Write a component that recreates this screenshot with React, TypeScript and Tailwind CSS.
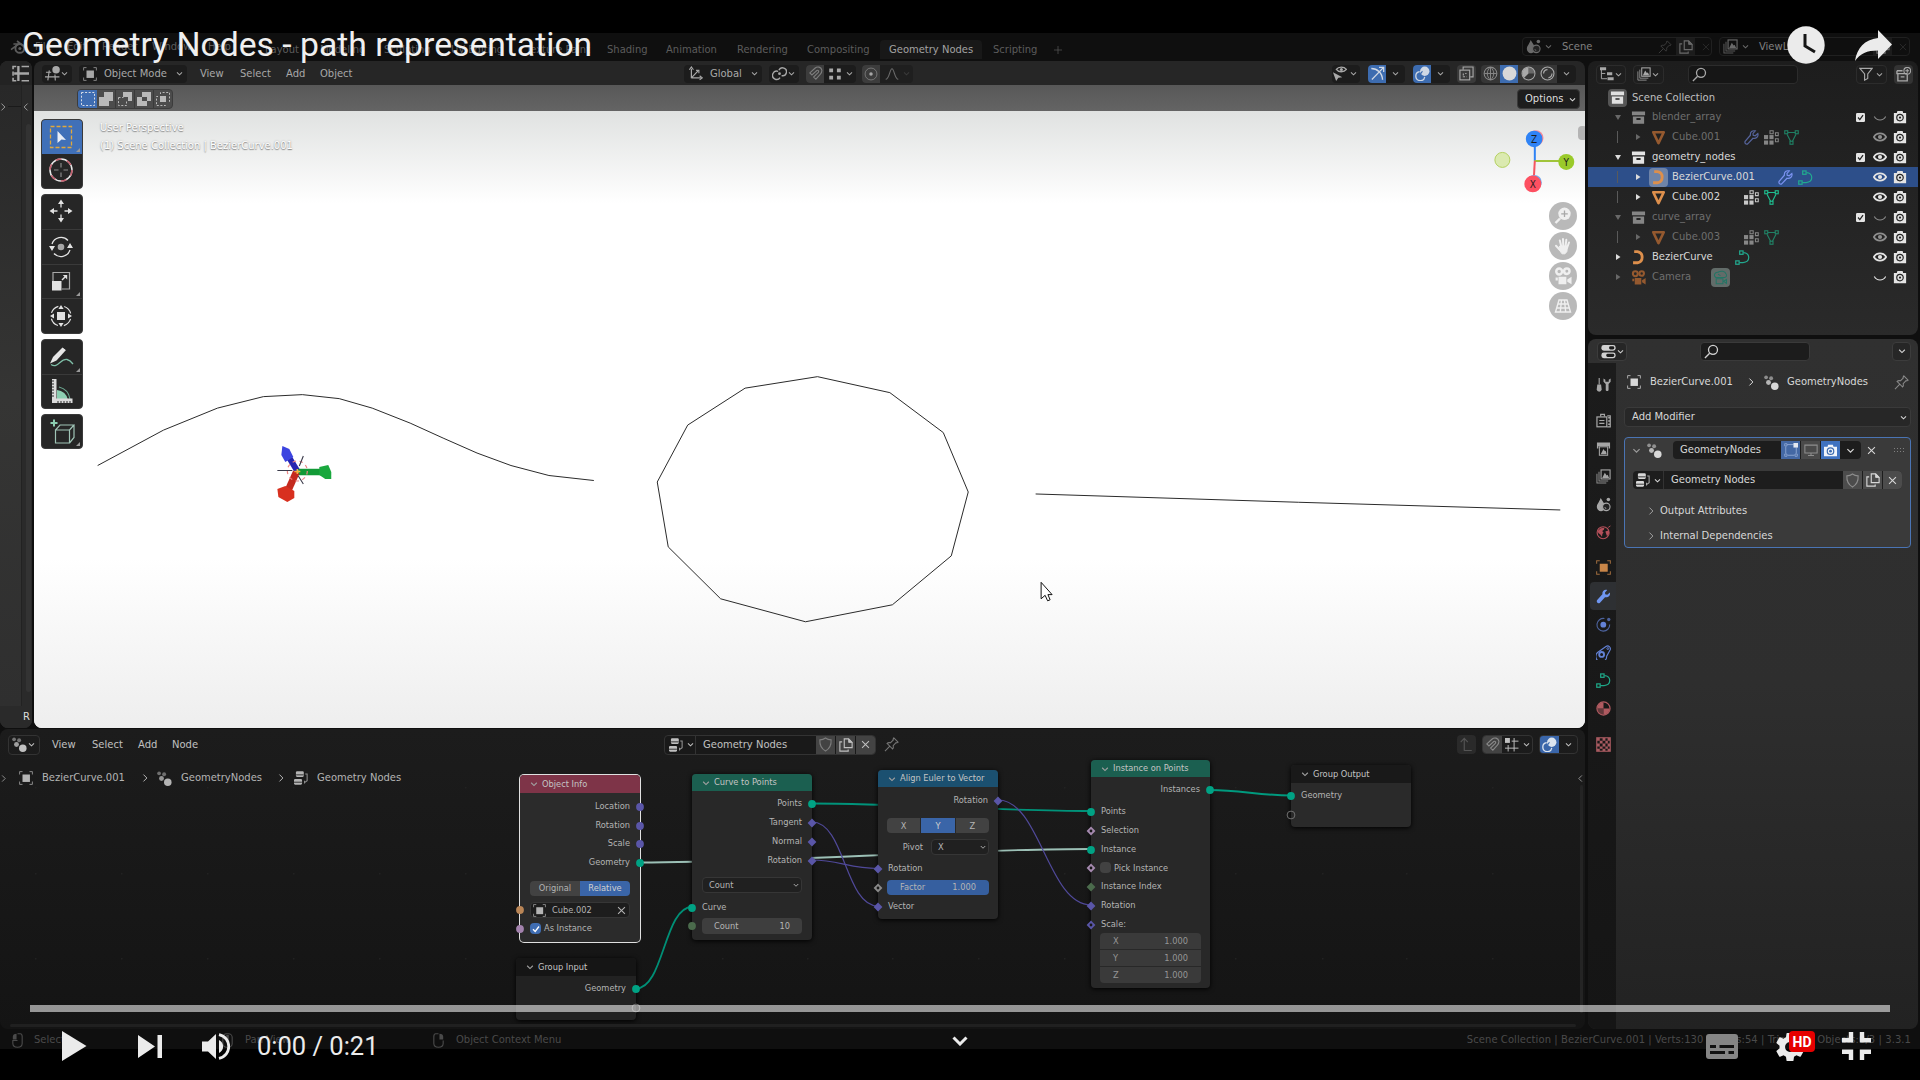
import React from "react";

type IconProps = { n: string; s?: number; className?: string };

const chev = "M3.5 6 L8 10.5 L12.5 6";

const ICONS: Record<string, React.ReactNode> = {
  down: <path d={chev} strokeWidth="1.8" />,
  right: <path d="M5.5 2.5 L11 8 L5.5 13.5" strokeWidth="1.6" />,
  left: <path d="M10.5 2.5 L5 8 L10.5 13.5" strokeWidth="1.6" />,
  x: <path d="M3 3 L13 13 M13 3 L3 13" strokeWidth="1.5" />,
  plus: <path d="M8 1.5 V14.5 M1.5 8 H14.5" strokeWidth="1.1" />,
  triRight: <path d="M4 2 L13 8 L4 14 Z" fill="currentColor" stroke="none" />,
  triDown: <path d="M2 4 L14 4 L8 14 Z" fill="currentColor" stroke="none" />,
  object: (
    <>
      <rect x="4" y="4" width="8.5" height="8.5" fill="currentColor" stroke="none" />
      <path d="M.7 4 V.7 H4 M12 .7 H15.3 V4 M15.3 12 V15.3 H12 M4 15.3 H.7 V12" strokeWidth="1.1" opacity=".75" />
    </>
  ),
  dots: (
    <g fill="currentColor" stroke="none">
      <circle cx="11.5" cy="12" r="4" />
      <circle cx="4.8" cy="8" r="2.6" opacity=".8" />
      <circle cx="2.2" cy="2.4" r="2" opacity=".55" />
      <circle cx="7.6" cy="3.4" r="2.1" opacity=".55" />
    </g>
  ),
  tree: (
    <>
      <g fill="currentColor" stroke="none">
        <rect x="2.2" y=".4" width="9" height="6.4" rx="1.3" />
        <rect x="0" y="9" width="9.2" height="6.6" rx="1.3" />
      </g>
      <path d="M2.4 4.4 H11 M0 12.8 H9" stroke="#222" strokeWidth="1" />
      <path d="M12.8 3.4 H15 V11 L11.6 13.5 M12 11 V14.4" strokeWidth="1.2" opacity=".75" />
    </>
  ),
  shield: <path d="M8 1 C10 2.6 12 3 14 3 C14.4 9 12.2 12.6 8 15 C3.8 12.6 1.6 9 2 3 C4 3 6 2.6 8 1 Z" strokeWidth="1.2" />,
  copy: (
    <>
      <path d="M6 1 H11 L15 5 V11 H6 Z" strokeWidth="1.3" />
      <path d="M11 1 V5 H15 Z" fill="currentColor" strokeWidth="1" />
      <path d="M3.6 4.5 H1 V15 H10.5 V13" strokeWidth="1.3" />
    </>
  ),
  pin: <path d="M10.5 1 L15 5.5 L13.6 6.4 L12.8 6 L9.8 9.2 C10.2 10.6 10 11.8 9.2 12.8 L3.2 6.8 C4.2 6 5.4 5.8 6.8 6.2 L10 3.2 L9.6 2.4 Z M6 10 L1 15" strokeWidth="1.1" />,
  search: (
    <>
      <circle cx="9.6" cy="6.2" r="4.8" strokeWidth="1.4" />
      <path d="M6 9.8 L1 15" strokeWidth="1.4" />
    </>
  ),
  scene: (
    <>
      <path d="M5 1 L9 7.5 A4.6 4.6 0 1 1 1 9.5 C1 8 3 6 5 1 Z" fill="currentColor" stroke="none" />
      <circle cx="11" cy="10.5" r="4" fill="#222" strokeWidth="1.2" />
      <path d="M9.5 10.8 A1.6 1.6 0 0 0 11 12.4" strokeWidth="1" />
      <circle cx="13.2" cy="2.6" r="1.9" fill="currentColor" stroke="none" />
    </>
  ),
  layers: (
    <>
      <rect x="5.4" y="1" width="9.6" height="9.6" strokeWidth="1.2" />
      <path d="M6.6 9.6 L9.4 4 L11.4 7 L12.4 6 L14 9.6 Z" fill="currentColor" stroke="none" />
      <path d="M3.2 3 V12.8 H13 M1 5 V15 H11" strokeWidth="1.1" opacity=".8" />
    </>
  ),
  printer: (
    <>
      <path d="M1 1.5 H15 V8 H13.5 V5.5 H2.5 V8 H1 Z" fill="currentColor" stroke="none" />
      <rect x="3.6" y="6.2" width="8.8" height="9" strokeWidth="1.1" />
      <path d="M5 14 L8 8.6 L9.6 11 L10.4 10.4 L11.4 14 Z" fill="currentColor" stroke="none" />
    </>
  ),
  render: (
    <>
      <rect x="1" y="4.2" width="10.5" height="10.5" strokeWidth="1.3" />
      <path d="M5 3.8 V1.4 H9 V3.8 M3.5 8 H9 M3.5 11 H9" strokeWidth="1.3" />
      <path d="M12 3 H15.2 V14.8 H12" strokeWidth="1.3" />
      <path d="M13 5 H15 M13 8.4 H15 M13 12 H15" strokeWidth="1.6" />
    </>
  ),
  tool: (
    <>
      <path d="M3.4 1 V8" strokeWidth="1.2" />
      <path d="M1.4 8 H5.4 L6 13 A2.6 2.6 0 0 1 .8 13 Z" fill="currentColor" stroke="none" />
      <path d="M8 1.5 V5 L10.4 7.4 V14 Q12 16 13.4 14 V7.4 L15.6 5 V1.5 L13.6 3 V5 H10 V3 Z" fill="currentColor" stroke="none" />
    </>
  ),
  world: (
    <>
      <circle cx="7.6" cy="8.2" r="6.4" strokeWidth="1.2" />
      <path d="M2 6 L5 3.4 L9 3 L8.4 5 L6.6 6.4 L8 8 L6.8 9.6 L6.4 12.6 L4.6 10 L2.4 8.6 Z M10 7 L13.8 5.6 L14 9 L11.8 12 L10.8 9.4 Z" fill="currentColor" stroke="none" />
      <path d="M13 2.6 L15.4 1" strokeWidth="1" />
    </>
  ),
  wrench: <path d="M14.8 3.8 L12 6.2 L9.8 5.6 L9.6 3.6 L12 1 C9 .2 6.4 2 6.8 5.6 L1 12 C.2 14.2 2 15.8 4 14.8 L9.6 8.8 C13.2 9.4 15.6 7 14.8 3.8 Z" fill="currentColor" stroke="none" />,
  wrenchO: <path d="M14.8 3.8 L12 6.2 L9.8 5.6 L9.6 3.6 L12 1 C9 .2 6.4 2 6.8 5.6 L1.2 12 C.4 14.2 2 15.8 4 14.8 L9.6 8.8 C13.2 9.4 15.6 7 14.8 3.8 Z" strokeWidth="1.3" />,
  physics: (
    <>
      <circle cx="7.8" cy="8.2" r="3.1" fill="currentColor" stroke="none" />
      <path d="M9 1.6 A6.8 6.8 0 1 0 14.6 8" strokeWidth="1.2" opacity=".7" />
      <circle cx="13.6" cy="2.6" r="1.8" fill="currentColor" stroke="none" opacity=".7" />
    </>
  ),
  constraint: (
    <>
      <circle cx="6" cy="10" r="2.6" strokeWidth="2" />
      <path d="M1.6 8 L10.6 1.6 A3 3 0 0 1 15 5.4 L11.4 12 A5.8 5.8 0 1 1 1.6 8 Z" strokeWidth="1.2" />
      <circle cx="12.6" cy="3.8" r="1" strokeWidth="1" />
    </>
  ),
  curve: (
    <>
      <rect x="5" y="1" width="3.6" height="3.6" strokeWidth="1.3" />
      <rect x=".8" y="11.6" width="3.6" height="3.6" strokeWidth="1.3" />
      <path d="M9 2.8 C16.6 3.2 16.6 13 8.6 13.4 H4.6" strokeWidth="1.3" />
    </>
  ),
  curveObj: <path d="M3.4 1.8 H7 A6 6 0 0 1 7 13.6 H2.2" strokeWidth="3" />,
  cone: <path d="M2.4 2.4 H13.6 L8 14 Z" strokeWidth="2.8" strokeLinejoin="round" />,
  mesh: (
    <>
      <path d="M4 2.6 H12 M3.2 4.6 L7 12 M12.8 4.6 L9 12" strokeWidth="1.2" />
      <rect x=".8" y=".8" width="3.2" height="3.2" strokeWidth="1.2" />
      <rect x="12" y=".8" width="3.2" height="3.2" strokeWidth="1.2" />
      <rect x="6.4" y="12" width="3.2" height="3.2" strokeWidth="1.2" />
    </>
  ),
  gridm: (
    <>
      <g fill="currentColor" stroke="none">
        <rect x="0" y="5.4" width="4.4" height="4.4" />
        <rect x="5.8" y="5.4" width="4.4" height="4.4" />
        <rect x="0" y="11.2" width="4.4" height="4.4" />
        <rect x="5.8" y="11.2" width="4.4" height="4.4" />
      </g>
      <path d="M6.4 .8 H9.8 V4 H6.4 Z M12.2 3 H15.2 V6 H12.2 Z M12.2 9.4 H15.2 V12.6 H12.2 Z" strokeWidth="1.1" />
    </>
  ),
  collection: (
    <>
      <rect x="1" y="1.6" width="14" height="4" fill="currentColor" stroke="none" />
      <path d="M2 6.8 H14 V14.6 H2 Z M5.8 8.4 V10.6 H10.2 V8.4 Z" fill="currentColor" stroke="none" fillRule="evenodd" />
    </>
  ),
  material: (
    <>
      <circle cx="8" cy="8" r="7" strokeWidth="1.3" />
      <path d="M8 8 H1.4 A6.6 6.6 0 0 1 8 1.4 Z M8 8 H14.6 A6.6 6.6 0 0 1 8 14.6 Z" fill="currentColor" stroke="none" />
      <path d="M8 8 V14.6 A6.6 6.6 0 0 1 1.4 8 Z" fill="currentColor" stroke="none" opacity=".5" />
    </>
  ),
  checker: (
    <>
      <rect x=".8" y=".8" width="14.4" height="14.4" strokeWidth="1.2" />
      <path d="M1 1h3v3h-3zM7 1h3v3h-3zM12.4 1h2.6v3h-2.6zM4 4h3v3h-3zM10 4h2.6v3h-2.6zM1 7h3v3h-3zM7 7h3v3h-3zM12.4 7h2.6v3h-2.6zM4 10h3v2.6h-3zM10 10h2.6v2.6h-2.6zM1 12.4h3v2.6h-3zM7 12.4h3v2.6h-3zM12.4 12.4h2.6v2.6h-2.6z" fill="currentColor" stroke="none" />
    </>
  ),
  eye: (
    <>
      <path d="M1 8 C4 2.6 12 2.6 15 8 C12 13.4 4 13.4 1 8 Z" strokeWidth="2" />
      <circle cx="8" cy="8" r="2.4" fill="currentColor" stroke="none" />
    </>
  ),
  eyeOff: <path d="M1.5 7.5 C4.5 12.8 11.5 12.8 14.5 7.5" strokeWidth="1.3" />,
  cam: (
    <>
      <path d="M1 3.4 H4.4 L5 1 H11 L11.6 3.4 H15 V15 H1 Z" fill="currentColor" stroke="none" />
      <circle cx="8" cy="8.6" r="3.7" stroke="#262626" strokeWidth="1.4" />
      <circle cx="8" cy="8.6" r="1.3" fill="#262626" stroke="none" />
    </>
  ),
  camBlue: (
    <>
      <path d="M0 3.4 H4.4 L5 1 H11 L11.6 3.4 H16 V15 H0 Z" fill="currentColor" stroke="none" />
      <circle cx="8" cy="8.8" r="4" stroke="#3d6cb0" strokeWidth="1.5" />
      <circle cx="8" cy="8.8" r="1.7" fill="#3d6cb0" stroke="none" />
    </>
  ),
  movie: (
    <>
      <circle cx="4.6" cy="4" r="2.6" strokeWidth="2.2" />
      <circle cx="11.4" cy="3.8" r="2.4" strokeWidth="2.2" />
      <path d="M4 8.6 H11 V15.4 H4 Z M11.8 11 L15.6 8.6 V15.4 L11.8 13 Z M1.4 9.4 H3.4 V12 H1.4 Z" fill="currentColor" stroke="none" />
    </>
  ),
  camData: (
    <>
      <path d="M3 8 C0 6 2 2 5.4 2.4 C8 .6 13 .8 13.8 4 C15.4 6 14 8 12.4 8 Z M5.4 4.6 L8 6" strokeWidth="1.1" />
      <path d="M3.4 9.4 H10.6 V14.6 H3.4 Z M11.4 12 L14.4 10 V14.4 Z" strokeWidth="1.1" />
    </>
  ),
  magnet: <path d="M2 7.4 L7.4 2.4 C10 0 14.2 1 14.8 4.4 C15 6.6 14.2 7.8 13 9 L8.4 14 L6 11.8 L11 6.8 C12 5.4 10.6 4 9.4 4.8 L4.2 9.6 Z" strokeWidth="1.2" />,
  link: (
    <>
      <path d="M8.6 12.4 A4.4 4.4 0 1 1 6.6 5.8" strokeWidth="1.5" />
      <path d="M7.4 4.4 A4.2 4.2 0 1 1 10.2 10.2" strokeWidth="1.5" />
      <circle cx="8" cy="8.2" r="1.5" fill="currentColor" stroke="none" />
    </>
  ),
  snapDots: (
    <path d="M1.4 1.6h4.4v4.4h-4.4zM10.2 1.6h4.4v4.4h-4.4zM1.4 10h4.4v4.4h-4.4zM10.2 10h4.4v4.4h-4.4z" fill="currentColor" stroke="none" />
  ),
  prop: (
    <>
      <circle cx="8" cy="8" r="6.8" strokeWidth="1" opacity=".6" />
      <circle cx="8" cy="8" r="2" fill="currentColor" stroke="none" />
    </>
  ),
  falloff: <path d="M.8 14 C5 14 5.4 2 8 2 C10.6 2 11 14 15.2 14" strokeWidth="1.3" />,
  axes: (
    <>
      <path d="M3.6 3 V13 M3.6 12.6 H14 M3.6 12.6 L11 5" strokeWidth="1.3" />
      <path d="M1.4 4 L3.6 1 L5.8 4 M12.4 10.4 L15.2 12.6 L12.4 14.8 M8.6 4.6 H11.6 V7.6" strokeWidth="1.2" />
    </>
  ),
  view3d: (
    <>
      <circle cx="11.8" cy="4" r="4" fill="currentColor" stroke="none" />
      <path d="M1 6.6 H6.6 M0 11.6 H15.4 M4.6 4.6 L3 15.4 M10.6 9 L11 15.4" strokeWidth="1.2" />
    </>
  ),
  sheet: (
    <>
      <path d="M6 1 V15 M2 8 H16" strokeWidth="2.2" />
      <path d="M1 4 V1.4 H4 M9 1.4 H16 M1 6 V10 M1 12 V14.8 H4 M9 14.8 H16" strokeWidth="1.5" />
    </>
  ),
  selectable: (
    <>
      <path d="M1 6.6 L11 12 L6.8 12.6 L4.4 16 Z" fill="currentColor" stroke="none" />
      <path d="M4.6 3.6 C7 .4 12.6 .4 15.4 3.6 C12.6 7 7 7 4.6 3.6 Z" strokeWidth="1.4" />
      <circle cx="10" cy="3.6" r="1.6" fill="currentColor" stroke="none" />
    </>
  ),
  gizmo: (
    <>
      <path d="M1.4 2.6 C7.6 2.6 13 7 13.4 14.6" strokeWidth="1.5" />
      <path d="M2 14.4 L14 2 M9.6 1.4 H14.6 V6.4" strokeWidth="1.3" />
    </>
  ),
  overlay: (
    <>
      <circle cx="10.4" cy="5.6" r="5" fill="currentColor" stroke="none" />
      <path d="M5 6 A4.8 4.8 0 1 0 10.4 11.6" strokeWidth="1.4" />
      <path d="M6 10.2 A5 5 0 0 1 8 5.6" stroke="#3d6cb0" strokeWidth="1.2" />
    </>
  ),
  xray: (
    <>
      <path d="M4.4 4 V1 H15 V11.6 H12" strokeWidth="1.2" />
      <rect x="1" y="4.4" width="10.4" height="10.4" strokeWidth="1.2" />
      <path d="M4.6 8 V11.4 H8 M8 8 H6.6" strokeWidth="1.2" strokeDasharray="2 1.2" />
    </>
  ),
  globe: (
    <>
      <circle cx="8" cy="8" r="6.8" strokeWidth="1.1" />
      <path d="M1.4 8 H14.6 M8 1.2 V14.8 M8 1.2 C3.4 5 3.4 11 8 14.8 M8 1.2 C12.6 5 12.6 11 8 14.8" strokeWidth="1" />
    </>
  ),
  solid: <circle cx="8" cy="8" r="7.4" fill="currentColor" stroke="none" />,
  matp: (
    <>
      <circle cx="8" cy="8" r="6.9" strokeWidth="1.1" />
      <path d="M8 8 V1.4 A6.6 6.6 0 0 0 1.4 8 A6.6 6.6 0 0 0 3.4 12.6 Z" fill="currentColor" stroke="none" />
      <path d="M8 1.4 A6.6 6.6 0 0 1 14.6 8 H8 Z" fill="currentColor" stroke="none" opacity=".45" />
    </>
  ),
  rendered: (
    <>
      <circle cx="8" cy="8" r="6.9" strokeWidth="1.2" />
      <path d="M3.8 8 A4.4 4.4 0 0 1 8 3.8 M9 12.6 A4.8 4.8 0 0 0 12.8 8" strokeWidth="1.3" />
    </>
  ),
  outliner: (
    <>
      <path d="M1.6 2 V13.4 H8 M1.6 7.4 H6" strokeWidth="1.1" />
      <path d="M0 .4h7v3.4h-7zM8 6h6v3.4h-6zM8.6 11.8h7v3.4h-7z" fill="currentColor" stroke="none" />
    </>
  ),
  filter: <path d="M1 1.6 H15 L10 8 V13 L6.4 15 V8 Z" strokeWidth="1.3" />,
  newcol: (
    <>
      <path d="M1 4 H7 M1 4 V7 H12 M2 7 V14.8 H12 V8 M5 10.6 H9" strokeWidth="1.4" />
      <circle cx="12" cy="4" r="3.6" strokeWidth="1.1" />
      <path d="M12 2 V6 M10 4 H14" strokeWidth="1.1" />
    </>
  ),
  props: (
    <>
      <rect x=".4" y="1" width="15.2" height="6.2" rx="2.6" fill="currentColor" stroke="none" />
      <rect x=".4" y="9" width="15.2" height="6.2" rx="2.6" fill="currentColor" stroke="none" />
      <rect x="8.6" y="2.4" width="5.6" height="3.4" rx="1.5" fill="#1b1b1b" stroke="none" />
      <rect x="5.6" y="10.4" width="8.6" height="3.4" rx="1.5" fill="#1b1b1b" stroke="none" />
    </>
  ),
  edit: (
    <>
      <path d="M3.4 1.8 H11 M2 4 V12 M4 14 H12 M14 5 V12" strokeWidth="1.1" />
      <path d="M.8 .8h2.6v2.6h-2.6zM.8 12.6h2.6v2.6h-2.6zM12.6 12.6h2.6v2.6h-2.6z" strokeWidth="1" />
      <rect x="10.8" y="0" width="5.2" height="5.2" fill="#e4e8f0" stroke="none" />
    </>
  ),
  screen: <path d="M1 2.4 H15 V11.4 H1 Z M8 11.4 V14 M4.6 14.2 H11.4" strokeWidth="1.2" />,
  upArrow: <path d="M5.6 14.6 V2 M1.8 5.4 L5.6 1.4 L9.4 5.4 M5.6 14.4 H13.6" strokeWidth="1.2" />,
  nodeSnap: (
    <>
      <rect x="0" y="0" width="5.6" height="5.6" fill="currentColor" stroke="none" />
      <path d="M10.4 0 V15.4 M3.6 8 V15.4 M7.6 3.6 H15.4 M0 11.6 H15.4" strokeWidth="1.1" />
    </>
  ),
  mouseL: (
    <>
      <path d="M8 .8 H11 Q13 .8 13 4 V11 Q13 15.2 8 15.2 Q3 15.2 3 11 V8 H8" strokeWidth="1.2" />
      <path d="M7 .8 V7 H3 V4 Q3 .8 7 .8Z" fill="currentColor" stroke="none" />
    </>
  ),
  mouseM: (
    <>
      <rect x="3" y=".8" width="10" height="14.4" rx="4" strokeWidth="1.2" />
      <rect x="6.6" y="2" width="2.8" height="6" fill="currentColor" stroke="none" />
    </>
  ),
  mouseR: (
    <>
      <path d="M8 .8 H5 Q3 .8 3 4 V11 Q3 15.2 8 15.2 Q13 15.2 13 11 V8" strokeWidth="1.2" />
      <path d="M9 .8 V7 H13 V4 Q13 .8 9 .8Z" fill="currentColor" stroke="none" />
    </>
  ),
  blender: (
    <>
      <path d="M1 10.6 L8.6 5 H3.4 M7 2 L13.4 7" strokeWidth="1.6" />
      <circle cx="9.8" cy="9.4" r="4.4" strokeWidth="1.9" />
      <circle cx="9.8" cy="9.4" r="1.5" fill="currentColor" stroke="none" />
    </>
  ),
};

function Ic({ n, s = 14, className = "" }: IconProps) {
  return (
    <svg width={s} height={s} viewBox="0 0 16 16" fill="none" stroke="currentColor" className={"shrink-0 " + className}>
      {ICONS[n]}
    </svg>
  );
}

/* ---------- top bar ---------- */

function TopBar() {
  return (
    <div className="flex h-[27px] items-center bg-[#0f0f0f] text-[#5c5c5c]">
      <div className="flex w-[265px] shrink-0 items-center pl-2.5">
        <Ic n="blender" s={16} />
        <span className="ml-[9px] w-8">File</span>
        <span className="w-[35px]">Edit</span>
        <span className="w-[50px]">Render</span>
        <span className="w-[56px]">Window</span>
        <span>Help</span>
      </div>
      <div className="flex items-center pt-[6px]">
        <span className="w-[55px]">Layout</span>
        <span className="w-16">Modeling</span>
        <span className="w-[67px]">Sculpting</span>
        <span className="w-[75px]">UV Editing</span>
        <span className="w-[81px]">Texture Paint</span>
        <span className="w-[59px]">Shading</span>
        <span className="w-[71px]">Animation</span>
        <span className="w-[70px]">Rendering</span>
        <span className="w-[73px]">Compositing</span>
        <span className="flex h-[19px] w-[102px] items-center rounded-t bg-[#181818] pl-[9px] text-[#a2a2a2]">Geometry Nodes</span>
        <span className="ml-[11px] w-[60px]">Scripting</span>
        <Ic n="plus" s={10} />
      </div>
      <div className="ml-auto mr-2.5 flex items-center text-[#6a6a6a]">
        <div className="flex h-[19px] w-[190px] items-center rounded border border-[#202020] pl-[3px]">
          <Ic n="scene" s={15} />
          <Ic n="down" s={9} className="ml-[3px]" />
          <span className="ml-[9px] w-[96px] text-[#808080]">Scene</span>
          <Ic n="pin" s={14} className="text-[#3c3c3c]" />
          <span className="ml-1 flex h-[17px] w-[19px] items-center justify-center bg-[#1c1c1c]">
            <Ic n="copy" s={14} />
          </span>
          <Ic n="x" s={10} className="ml-[6px] text-[#2a2a2a]" />
        </div>
        <div className="ml-[7px] flex h-[19px] w-[191px] items-center rounded border border-[#202020] pl-[3px]">
          <Ic n="layers" s={15} />
          <Ic n="down" s={9} className="ml-[3px]" />
          <span className="ml-[9px] w-[112px] text-[#808080]">ViewLayer</span>
          <span className="ml-[2px] flex h-[17px] w-[19px] items-center justify-center bg-[#1c1c1c]">
            <Ic n="copy" s={14} />
          </span>
          <Ic n="x" s={10} className="ml-[6px] text-[#2a2a2a]" />
        </div>
      </div>
    </div>
  );
}

/* ---------- left strip ---------- */

function LeftStrip() {
  return (
    <div className="flex w-[32px] shrink-0 flex-col overflow-hidden rounded-lg bg-[#2f2f2f]">
      <div className="flex h-[24px] items-center justify-end bg-[#232323] pr-[3px] text-[#a8a8a8]">
        <Ic n="sheet" s={17} />
      </div>
      <div className="flex grow">
        <div className="flex w-[22px] flex-col border-r border-[#222] bg-linear-to-b from-[#282828] via-[#353534] to-[#2f2f2f]">
          <div className="mt-[15px] flex h-[13px] items-center">
            <Ic n="right" s={10} className="-ml-[2px] text-[#9a9a9a]" />
            <span className="h-px grow bg-[#1a1a1a]" />
          </div>
        </div>
        <div className="flex grow flex-col bg-[#2a2a2a]">
          <Ic n="left" s={10} className="mt-[17px] -ml-px text-[#9a9a9a]" />
          <span className="mt-3 ml-1 w-[5px] grow rounded bg-[#333]" />
          <span className="h-[14px]" />
        </div>
      </div>
      <div className="flex h-[22px] items-center justify-end bg-[#2a2a2a] pr-[2px] text-[#dcdcdc]">R</div>
    </div>
  );
}

/* ---------- 3D viewport ---------- */

function ViewportHeader() {
  return (
    <div className="flex h-[24px] shrink-0 items-center bg-[#262626] pt-px text-[#a8a8a8]">
      <div className="ml-2 flex h-[18px] w-[30px] items-center justify-between rounded bg-[#1c1c1c] px-[3px]">
        <Ic n="view3d" s={15} />
        <Ic n="down" s={9} />
      </div>
      <div className="ml-[7px] flex h-[18px] w-[108px] items-center rounded bg-[#1c1c1c] pr-[3px] pl-[4px]">
        <Ic n="object" s={14} />
        <span className="ml-[7px] grow">Object Mode</span>
        <Ic n="down" s={9} />
      </div>
      <span className="ml-[13px] w-10">View</span>
      <span className="w-[46px]">Select</span>
      <span className="w-[34px]">Add</span>
      <span className="w-[34px]">Object</span>

      <div className="ml-[330px] flex h-[18px] w-[78px] items-center rounded bg-[#1c1c1c] pr-[3px] pl-1">
        <Ic n="axes" s={15} />
        <span className="ml-[7px] grow">Global</span>
        <Ic n="down" s={9} />
      </div>
      <div className="ml-[7px] flex h-[18px] w-[30px] items-center justify-between rounded bg-[#1c1c1c] px-[3px]">
        <Ic n="link" s={15} />
        <Ic n="down" s={9} />
      </div>
      <div className="ml-[7px] flex h-[18px] w-[50px] items-center rounded bg-[#1c1c1c] pr-[2px]">
        <span className="flex h-full w-[18px] items-center justify-center rounded-l bg-[#3c3c3c]">
          <Ic n="magnet" s={15} className="text-[#7d7d7d]" />
        </span>
        <Ic n="snapDots" s={14} className="ml-[4px]" />
        <Ic n="down" s={9} className="ml-auto" />
      </div>
      <div className="ml-[6px] flex h-[18px] w-[51px] items-center rounded bg-[#1f1f1f] pr-[2px]">
        <span className="flex h-full w-[18px] items-center justify-center rounded-l bg-[#3c3c3c]">
          <Ic n="prop" s={14} />
        </span>
        <Ic n="falloff" s={14} className="ml-[5px] text-[#6a6a6a]" />
        <Ic n="down" s={9} className="ml-auto text-[#3a3a3a]" />
      </div>

      <div className="ml-auto flex h-[18px] w-[28px] items-center justify-between rounded bg-[#1c1c1c] pr-[2px]">
        <Ic n="selectable" s={15} />
        <Ic n="down" s={9} />
      </div>
      <div className="ml-[8px] flex h-[18px] w-[37px] items-center rounded bg-[#1c1c1c]">
        <span className="flex h-full w-[18px] items-center justify-center rounded-l bg-[#3d6cb0] text-[#d0d8e4]">
          <Ic n="gizmo" s={15} />
        </span>
        <Ic n="down" s={9} className="ml-[5px]" />
      </div>
      <div className="ml-[8px] flex h-[18px] w-[37px] items-center rounded bg-[#1c1c1c]">
        <span className="flex h-full w-[18px] items-center justify-center rounded-l bg-[#3d6cb0] text-[#d0d8e4]">
          <Ic n="overlay" s={15} />
        </span>
        <Ic n="down" s={9} className="ml-[5px]" />
      </div>
      <span className="ml-[7px] flex h-[18px] w-[19px] items-center justify-center rounded bg-[#3a3a3a]">
        <Ic n="xray" s={15} />
      </span>
      <div className="mr-[9px] ml-[5px] flex h-[18px] w-[95px] items-center overflow-hidden rounded bg-[#363636]">
        <span className="flex w-[19px] justify-center text-[#8a8a8a]">
          <Ic n="globe" s={15} />
        </span>
        <span className="flex h-full w-[18px] items-center justify-center bg-[#3d6cb0] text-[#d8d8d8]">
          <Ic n="solid" s={15} />
        </span>
        <span className="flex w-[20px] justify-center">
          <Ic n="matp" s={15} />
        </span>
        <span className="flex w-[19px] justify-center">
          <Ic n="rendered" s={15} />
        </span>
        <span className="flex h-full grow items-center justify-center bg-[#1c1c1c]">
          <Ic n="down" s={9} />
        </span>
      </div>
    </div>
  );
}

function SelectModes() {
  const cell = "flex h-full w-[19px] items-center justify-center border-r border-[#3a3a3a] text-[#b9b9b9]";
  return (
    <div className="ml-[43px] flex h-[20px] w-[96px] overflow-hidden rounded border border-[#3c3c3c] bg-[#4c4c4c]">
      <span className="flex h-full w-[19px] items-center justify-center bg-[#3f6db2] text-[#d8dde6]">
        <svg width="16" height="16" viewBox="0 0 16 16" fill="none" stroke="currentColor">
          <rect x="1.5" y="1.5" width="13" height="13" strokeDasharray="2 1.6" />
        </svg>
      </span>
      <span className={cell}>
        <svg width="16" height="16" viewBox="0 0 16 16" fill="currentColor">
          <path d="M6 1h9v9h-4v5H1V6h5z" />
        </svg>
      </span>
      <span className={cell}>
        <svg width="16" height="16" viewBox="0 0 16 16">
          <path d="M6 1h9v9h-4V6H6z" fill="currentColor" />
          <path d="M1.5 6.5h5M1.5 6.5v8h8v-4" fill="none" stroke="currentColor" strokeDasharray="2 1.6" />
        </svg>
      </span>
      <span className={cell}>
        <svg width="16" height="16" viewBox="0 0 16 16" fill="currentColor" fillRule="evenodd">
          <path d="M6 1h9v9h-4v5H1V6h5zM6 6v4h5V6z" />
        </svg>
      </span>
      <span className="flex h-full grow items-center justify-center text-[#b9b9b9]">
        <svg width="16" height="16" viewBox="0 0 16 16">
          <rect x="5" y="5" width="6" height="6" fill="currentColor" />
          <path d="M5.5 3V1.500h9v9h-2M3 5.500H1.500v9h9v-2" fill="none" stroke="currentColor" strokeDasharray="2 1.600" />
        </svg>
      </span>
    </div>
  );
}

const Corner = () => <span className="absolute right-[2px] bottom-[2px] border-b-4 border-l-4 border-b-[#9a9a9a] border-l-transparent" />;

function Toolbar() {
  const grp = "flex w-[42px] flex-col overflow-hidden rounded border border-[#3a3a3a] bg-[#262626] text-[#e2e2e2] ";
  const cell = "relative flex grow basis-0 items-center justify-center pr-[3px]";
  const sep = " border-b border-[#3a3a3a]";
  return (
    <div className="flex w-[42px] flex-col gap-[5px]">
      <div className={grp + "h-[70px]"}>
        <div className={cell + " bg-[#4070b8]"}>
          <svg width="24" height="24" viewBox="0 0 24 24" fill="none">
            <rect x="1.500" y="1.500" width="21" height="21" stroke="#e0a83c" strokeWidth="1.300" strokeDasharray="4 2" />
            <path d="M8.500 6 L17 15 L12.500 14.600 L8.500 18 Z" fill="#e8edf6" />
          </svg>
          <Corner />
        </div>
        <div className={cell}>
          <svg width="26" height="26" viewBox="0 0 26 26" fill="none" className="-mt-[3px]">
            <circle cx="13" cy="13" r="11" stroke="#e8e8e8" strokeWidth="1.500" />
            <circle cx="13" cy="13" r="11" stroke="#c25a6a" strokeWidth="1.500" strokeDasharray="5.760 5.760" />
            <path d="M13 6v4.500M13 15.500V20M6 13h4.500M15.500 13H20" stroke="#8a8a8a" strokeWidth="1.200" />
          </svg>
        </div>
      </div>
      <div className={grp + "h-[140px]"}>
        <div className={cell + sep}>
          <svg width="24" height="24" viewBox="0 0 24 24" fill="currentColor" className="-mt-px">
            <path d="M12 .5l3 4.500H9zM12 23.500l3-4.500H9zM.5 12l4.500-3v6zM23.500 12l-4.500-3v6z" />
            <path d="M12 5v3.500M12 15.500v4M5 12h3.500M15.500 12h3.500" stroke="currentColor" strokeWidth="1.300" />
          </svg>
        </div>
        <div className={cell + sep}>
          <svg width="24" height="24" viewBox="0 0 24 24" fill="none" stroke="currentColor" strokeWidth="1.300">
            <path d="M3 9 A9.500 9.500 0 0 1 19 5.500M21 15 A9.500 9.500 0 0 1 5 18.500" />
            <path d="M0 11h6l-3 5zM18 13h6l-3-5z" fill="currentColor" stroke="none" />
            <circle cx="12" cy="12" r="3.300" fill="#a6a6a6" stroke="none" />
          </svg>
        </div>
        <div className={cell + sep}>
          <svg width="20" height="20" viewBox="0 0 20 20" fill="none" stroke="currentColor">
            <path d="M2 10 V1.500 H18.500 V18 H11" stroke="#a8a8a8" strokeWidth="1.200" />
            <rect x="1" y="10" width="9.500" height="9.500" fill="currentColor" stroke="none" />
            <path d="M11 9 L14.500 5.500" strokeWidth="1.400" />
            <path d="M11.800 4h4.400v4.400z" fill="currentColor" stroke="none" />
          </svg>
          <Corner />
        </div>
        <div className={cell}>
          <svg width="24" height="24" viewBox="0 0 24 24" fill="none" stroke="currentColor">
            <circle cx="12" cy="12" r="10" strokeWidth="1.200" strokeDasharray="9.700 6" strokeDashoffset="-3" />
            <rect x="8" y="8" width="8" height="8" fill="currentColor" stroke="none" />
            <path d="M12 1l2.600 4h-5.200zM12 23l2.600-4h-5.200zM1 12l4-2.600v5.200zM23 12l-4-2.600v5.200z" fill="currentColor" stroke="none" />
          </svg>
        </div>
      </div>
      <div className={grp + "h-[70px]"}>
        <div className={cell + sep}>
          <svg width="26" height="22" viewBox="0 0 26 22" fill="none" className="-mt-px">
            <path d="M5 12 L14.500 2.500 L18 5 L8.500 15.500 L2 18.500 Z" fill="#e6e6e6" />
            <path d="M14.500 1.500 L18.500 4.800" stroke="#262626" strokeWidth="1" />
            <path d="M3 19.500 C10 24 12 13.500 19 14.500 C22 15 23.500 17 25 19" stroke="#7fbfa8" strokeWidth="1.300" />
          </svg>
          <Corner />
        </div>
        <div className="relative flex grow basis-0 items-center justify-center pr-[1px]">
          <svg width="24" height="26" viewBox="0 0 24 26" fill="none">
            <path d="M7 12 A12 12 0 0 1 18 22 H7 Z" fill="#8ccfb2" />
            <path d="M9 9 C15 10.500 19 15 20 21" stroke="#6aa48e" strokeWidth="1.200" />
            <path d="M2 1 H6.500 V20.500 H22.500 V25 H2 Z" fill="#dcdcdc" />
            <path d="M2 3h2M2 6h2M2 9h2M2 12h2M2 15h2M2 18h2M8 25v-2M11 25v-2M14 25v-2M17 25v-2M20 25v-2" stroke="#262626" />
          </svg>
        </div>
      </div>
      <div className={grp + "h-[35px]"}>
        <div className="relative flex grow items-center justify-center pr-[1px]">
          <svg width="26" height="26" viewBox="0 0 26 26" fill="none" stroke="#9fc4b6" strokeWidth="1.200">
            <path d="M6.500 11h14v13h-14zM6.500 11l4.500-5h14l-4.500 5M25 6v12.500l-4.500 5.500" />
            <path d="M5 .5v7M1.500 4h7" stroke="#8ccfb2" strokeWidth="2" />
          </svg>
          <Corner />
        </div>
      </div>
    </div>
  );
}

function NavButtons() {
  const b = "flex h-[28px] w-[28px] items-center justify-center rounded-full bg-[#b9b9b9] text-[#efefef]";
  return (
    <div className="flex flex-col gap-[2px]">
      <span className={b}>
        <svg width="18" height="18" viewBox="0 0 18 18">
          <circle cx="10.500" cy="6.800" r="6.200" fill="currentColor" />
          <path d="M6 11.500 L1.500 16" stroke="currentColor" strokeWidth="2.400" />
          <path d="M10.500 3.500v6.600M7.200 6.800h6.600" stroke="#a8a8a8" strokeWidth="1.300" />
        </svg>
      </span>
      <span className={b}>
        <svg width="18" height="18" viewBox="0 0 18 18" fill="none" stroke="currentColor" strokeWidth="2" strokeLinecap="round">
          <path d="M5.800 3.500 L7.200 9M9 2 L9.300 9M12.300 2.800 L11.600 9M15 5.500 L13 11M2 8.800 L5.500 12.500" />
          <path d="M6 9h7.500l-.6 5.500L11 16.800H8L5 12.500z" fill="currentColor" strokeWidth="1" />
        </svg>
      </span>
      <span className={b}>
        <Ic n="movie" s={18} />
      </span>
      <span className={b}>
        <svg width="18" height="18" viewBox="0 0 18 18" fill="none" stroke="currentColor" strokeWidth="1.400">
          <path d="M5 3h8l3.500 12h-15zM4 7h10M2.800 11h12.400M7.500 3l-1.200 12M10.500 3l1.200 12" />
        </svg>
      </span>
    </div>
  );
}

function Viewport() {
  return (
    <section className="flex w-[1551px] flex-col overflow-hidden rounded-lg">
      <ViewportHeader />
      <div className="flex h-[26px] shrink-0 items-center bg-linear-to-b from-[#585858] to-[#646464] pt-[2px]">
        <SelectModes />
        <div className="mr-[5px] ml-auto flex h-[20px] w-[63px] items-center justify-between rounded border border-[#3a3a3a] bg-[#1d1d1d] pr-[2px] pl-[7px] text-[#dcdcdc]">
          Options
          <Ic n="down" s={9} />
        </div>
      </div>
      <div className="relative grow bg-linear-to-b from-[#e0e2e1] via-[#ffffff] via-15% to-[#ffffff] to-[75%]">
        <div className="absolute inset-x-0 bottom-0 h-[170px] bg-linear-to-b from-[#ffffff] to-[#eeeeee]" />
        <div className="absolute top-[8px] left-[7px]">
          <Toolbar />
        </div>
        <div className="absolute top-[8px] left-[66px] flex flex-col leading-[18px] text-white [text-shadow:0_1px_1px_#888,0_0_2px_#aaa]">
          <span>User Perspective</span>
          <span>(1) Scene Collection | BezierCurve.001</span>
        </div>
        <div className="absolute top-[91px] right-[8px]">
          <NavButtons />
        </div>
        <span className="absolute top-[15px] -right-[2px] h-[14px] w-[9px] rounded bg-[#b4b4b4]" />
        <svg className="absolute inset-0 h-full w-full" viewBox="33 111 1551 618" fill="none" stroke="#2a2a2a" strokeWidth="1">
          <g transform="translate(-1.5 .6)">
            <path d="M97 465.500 L163 430 L217 408 L263 396.500 L302 394.500 L339 398.500 L372 408 L410 423 L443 438 L477 453 L511 465.500 L549 475.500 L594 480.500" />
            <path d="M818 376.500 L890.500 392.500 L944 432.500 L969 492 L952 556 L893 605 L806 622 L721 599 L668.500 547 L657.500 482 L688 425 L745.500 388 Z" />
            <path d="M1036.500 494 L1300 502.300 L1562 510" />
            <path d="M297 471 L286 453" stroke="#2626b0" strokeWidth="6" />
            <path d="M282 446 L289 449 L293 457 L285 462 L281 455 Z" fill="#3c44e0" stroke="none" />
            <path d="M298 472 H322" stroke="#129a36" strokeWidth="6.500" />
            <path d="M319 467 L328 465 L331 472 L331 479 L325 479 L319 475 Z" fill="#1aa83e" stroke="none" />
            <path d="M296 472 L288 490" stroke="#c42a1e" strokeWidth="7" />
            <path d="M277 489 L285 486 L294 491 L294 498 L287 502 L278 497 Z" fill="#d8301f" stroke="none" />
            <circle cx="297" cy="471" r="10" stroke="#e88" strokeWidth="1.200" strokeDasharray="3.500 3.500" />
            <path d="M277 470.500 H292 M303 456 L299 466 M298 476 L303 484" stroke="#3a3a4a" strokeWidth="1.100" />
            <path d="M294 471.500h6M297 469v5" stroke="#f5b23c" strokeWidth="1.500" />
            <path d="M1042 582.500 V599 L1046 595.500 L1048.500 601 L1051 600 L1048.800 594.800 H1053 Z" fill="#fff" stroke="#111" />
          </g>
          <path d="M1535 161 V145" stroke="#2f83f5" strokeWidth="2" />
          <path d="M1534.500 161 H1560" stroke="#a0c43a" strokeWidth="2" />
          <path d="M1535 161 L1534 178" stroke="#f55560" strokeWidth="2" />
          <circle cx="1536" cy="138" r="7.700" fill="#f58a98" stroke="none" />
          <circle cx="1534.300" cy="139" r="8.300" fill="#2f83f5" stroke="none" />
          <circle cx="1534.500" cy="182.500" r="7.500" fill="#7aa6e8" stroke="none" />
          <circle cx="1533" cy="184" r="8.500" fill="#fd5061" stroke="none" />
          <circle cx="1566.500" cy="162" r="8" fill="#9aca2a" stroke="none" />
          <circle cx="1502.500" cy="160" r="7.500" fill="#dbeab0" stroke="#b4d060" />
          <g fill="#1c1c1c" stroke="none" fontSize="10" textAnchor="middle">
            <text x="1534.300" y="143">Z</text>
            <text x="1566.500" y="166">Y</text>
            <text x="1533" y="188">X</text>
          </g>
        </svg>
      </div>
    </section>
  );
}

/* ---------- outliner ---------- */

type Item = {
  label: string;
  depth: number;
  icon: string;
  open?: boolean;
  dim?: boolean;
  sel?: boolean;
  w: string;
  data?: string[];
  check?: boolean;
  eye: "on" | "off" | "dim";
};

const ITEMS: Item[] = [
  { label: "blender_array", depth: 0, icon: "collection", open: true, dim: true, w: "w-[90px]", check: true, eye: "off" },
  { label: "Cube.001", depth: 1, icon: "cone", dim: true, w: "w-[72px]", data: ["wrenchO", "gridm", "mesh"], eye: "dim" },
  { label: "geometry_nodes", depth: 0, icon: "collection", open: true, w: "w-[90px]", check: true, eye: "on" },
  { label: "BezierCurve.001", depth: 1, icon: "curveObj", sel: true, w: "w-[106px]", data: ["wrenchO", "curve"], eye: "on" },
  { label: "Cube.002", depth: 1, icon: "cone", w: "w-[72px]", data: ["gridm", "mesh"], eye: "on" },
  { label: "curve_array", depth: 0, icon: "collection", open: true, dim: true, w: "w-[90px]", check: true, eye: "off" },
  { label: "Cube.003", depth: 1, icon: "cone", dim: true, w: "w-[72px]", data: ["gridm", "mesh"], eye: "dim" },
  { label: "BezierCurve", depth: 0, icon: "curveObj", w: "w-[83px]", data: ["curve"], eye: "on" },
  { label: "Camera", depth: 0, icon: "movie", dim: true, w: "w-[59px]", data: ["camData"], eye: "off" },
];

const DATA_COLOR: Record<string, string> = {
  wrenchO: "text-[#7a92f0]",
  gridm: "text-[#c8c8c8]",
  mesh: "text-[#1fbf90]",
  curve: "text-[#22a98f]",
  camData: "text-[#22a98f]",
};

function OutlinerRow({ it }: { it: Item }) {
  const iconColor = it.icon === "collection" ? (it.dim ? "text-[#858585]" : "text-[#e4e4e4]") : it.dim ? "text-[#94592f]" : "text-[#dd8f4c]";
  return (
    <div className={"flex h-[20px] items-center " + (it.sel ? "bg-[#2d4f8a]" : "")}>
      <span className={"flex h-full shrink-0 items-center " + (it.depth ? "w-[43px]" : "w-[23px]")}>
        {it.depth > 0 && <span className="ml-[29px] h-3 w-px bg-[#5a5a5a]" />}
      </span>
      <Ic n={it.open ? "triDown" : "triRight"} s={8} className={"ml-[3px] " + (it.dim ? "text-[#686868]" : "text-[#dcdcdc]")} />
      <span className={"ml-[7px] flex h-[19px] w-[19px] items-center justify-center rounded " + (it.sel ? "bg-[#6f84a8] " : "") + iconColor}>
        <Ic n={it.icon} s={15} />
      </span>
      <span className={"ml-[4px] shrink-0 " + it.w + (it.dim ? " text-[#6e6e6e]" : " text-[#d8d8d8]")}>{it.label}</span>
      <span className={"flex gap-[5px] " + (it.dim ? "opacity-60" : "")}>
        {it.data?.map((d) => (
          <span key={d} className={DATA_COLOR[d] + (d === "camData" ? " rounded bg-[#8a9a96] p-[2px]" : "")}>
            <Ic n={d} s={15} />
          </span>
        ))}
      </span>
      <span className="ml-auto flex w-[62px] items-center justify-end gap-[6px] pr-[11px] text-[#e4e4e4]">
        {it.check && (
          <svg width="11" height="11" viewBox="0 0 11 11" className="mr-[2px]">
            <rect width="11" height="11" rx="1.500" fill="#e4e4e4" />
            <path d="M2.500 5.500 L4.700 8 L8.600 2.600" fill="none" stroke="#222" strokeWidth="1.500" />
          </svg>
        )}
        <Ic n={it.eye === "off" ? "eyeOff" : "eye"} s={14} className={it.eye === "dim" ? "text-[#8e8e8e]" : it.eye === "off" && it.check ? "text-[#8a8a8a]" : ""} />
        <Ic n="cam" s={14} />
      </span>
    </div>
  );
}

function Outliner() {
  return (
    <section className="flex h-[274px] w-[330px] flex-col overflow-hidden rounded-lg bg-linear-to-b from-[#1d1d1d] to-[#2a2a2a]">
      <div className="flex h-[26px] shrink-0 items-center text-[#a8a8a8]">
        <div className="ml-[8px] flex h-[19px] w-[30px] items-center justify-between rounded border border-[#2c2c2c] px-[3px]">
          <Ic n="outliner" s={14} />
          <Ic n="down" s={9} />
        </div>
        <div className="ml-[7px] flex h-[19px] w-[31px] items-center justify-between rounded border border-[#2c2c2c] px-[3px]">
          <Ic n="layers" s={14} />
          <Ic n="down" s={9} />
        </div>
        <div className="ml-[24px] flex h-[19px] w-[110px] items-center rounded border border-[#2c2c2c] bg-[#161616] pl-[3px]">
          <Ic n="search" s={15} />
        </div>
        <div className="ml-[58px] flex h-[19px] w-[31px] items-center justify-between rounded border border-[#2c2c2c] px-[2px]">
          <Ic n="filter" s={14} />
          <Ic n="down" s={9} />
        </div>
        <div className="ml-[7px] flex h-[19px] w-[19px] items-center justify-center rounded bg-[#333]">
          <Ic n="newcol" s={15} />
        </div>
      </div>
      <div className="flex h-[20px] items-center pt-px">
        <span className="ml-[20px] flex h-[18px] w-[19px] items-center justify-center rounded bg-[#555] text-[#e0e0e0]">
          <Ic n="collection" s={15} />
        </span>
        <span className="ml-[5px] text-[#c0c0c0]">Scene Collection</span>
      </div>
      {ITEMS.map((it) => (
        <OutlinerRow key={it.label} it={it} />
      ))}
    </section>
  );
}

/* ---------- properties ---------- */

const TABS: [string, string, string][] = [
  ["tool", "h-[43px]", "text-[#a6a6a6]"],
  ["render", "h-[28px]", "text-[#a6a6a6]"],
  ["printer", "h-[28px]", "text-[#a6a6a6]"],
  ["layers", "h-[28px]", "text-[#a6a6a6]"],
  ["scene", "h-[28px]", "text-[#a6a6a6]"],
  ["world", "h-[28px]", "text-[#b4505a]"],
  ["object", "h-[36px] pt-[7px]", "text-[#c98648]"],
  ["wrench", "h-[28px]", "text-[#6f96f0] bg-[#2e3033]"],
  ["physics", "h-[28px]", "text-[#6382d6]"],
  ["constraint", "h-[28px]", "text-[#6382d6]"],
  ["curve", "h-[28px]", "text-[#1fa888]"],
  ["material", "h-[28px]", "text-[#b05a60]"],
  ["checker", "h-[37px] pt-[7px]", "text-[#a85a60]"],
];

function Properties() {
  return (
    <section className="flex grow w-[330px] flex-col overflow-hidden rounded-lg bg-linear-to-b from-[#303030] via-[#2e2e2e] to-[#222222]">
      <div className="flex h-[24px] shrink-0 items-center text-[#d0d0d0]">
        <div className="ml-[9px] flex h-[19px] w-[30px] items-center justify-between rounded border border-[#3c3c3c] bg-[#262626] px-[3px]">
          <Ic n="props" s={15} />
          <Ic n="down" s={9} />
        </div>
        <div className="ml-[73px] flex h-[19px] w-[110px] items-center rounded border border-[#3a3a3a] bg-[#1c1c1c] pl-[3px]">
          <Ic n="search" s={15} />
        </div>
        <div className="ml-auto mr-[7px] flex h-[19px] w-[19px] items-center justify-center rounded border border-[#3c3c3c] bg-[#262626]">
          <Ic n="down" s={10} />
        </div>
      </div>
      <div className="flex grow">
        <div className="flex w-[28px] flex-col bg-linear-to-b from-[#1c1c1c] to-[#151515] pl-[2px]">
          {TABS.map(([n, h, c]) => (
            <span key={n} className={"flex shrink-0 items-center justify-center rounded-l " + h + " " + c}>
              <Ic n={n} s={15} />
            </span>
          ))}
        </div>
        <div className="flex grow flex-col pr-[7px] pl-[8px] text-[#d8d8d8]">
          <div className="mt-[9px] flex h-[20px] items-center pl-[3px]">
            <Ic n="object" s={14} />
            <span className="ml-[9px] w-[96px]">BezierCurve.001</span>
            <Ic n="right" s={10} />
            <Ic n="dots" s={15} className="ml-[8px]" />
            <span className="ml-[8px] grow">GeometryNodes</span>
            <Ic n="pin" s={15} className="mr-[2px] text-[#8a8a8a]" />
          </div>
          <div className="mt-[15px] flex h-[20px] items-center justify-between rounded border border-[#3a3a3a] bg-[#272727] pr-[2px] pl-[7px]">
            Add Modifier
            <Ic n="down" s={9} />
          </div>
          <div className="mt-[10px] flex h-[111px] flex-col rounded border border-[#4a74b4] bg-[#3a3a3a]">
            <div className="mt-[3px] flex h-[18px] items-center pl-[6px]">
              <Ic n="down" s={11} className="text-[#9a9a9a]" />
              <Ic n="dots" s={15} className="ml-[5px]" />
              <div className="ml-[11px] flex h-full w-[188px] items-center overflow-hidden rounded bg-[#1d1d1d]">
                <span className="w-[108px] pl-[7px]">GeometryNodes</span>
                <span className="flex h-full w-[19px] items-center justify-center bg-[#4468a4] text-[#8aa4d0]">
                  <Ic n="edit" s={14} />
                </span>
                <span className="ml-px flex h-full w-[19px] items-center justify-center bg-[#4a4a4a] text-[#8e8e8e]">
                  <Ic n="screen" s={14} />
                </span>
                <span className="ml-px flex h-full w-[19px] items-center justify-center bg-[#3f72c0] text-[#f0f4fa]">
                  <Ic n="camBlue" s={13} />
                </span>
                <Ic n="down" s={11} className="ml-[5px]" />
              </div>
              <Ic n="x" s={11} className="ml-[5px]" />
              <svg width="12" height="5" viewBox="0 0 12 5" className="ml-[17px]" fill="#808080">
                <path d="M0 0h1v1h-1zM3 0h1v1h-1zM6 0h1v1h-1zM9 0h1v1h-1zM0 3h1v1h-1zM3 3h1v1h-1zM6 3h1v1h-1zM9 3h1v1h-1z" />
              </svg>
            </div>
            <div className="mt-[12px] ml-[8px] flex h-[18px] w-[269px] items-center overflow-hidden rounded bg-[#1d1d1d]">
              <span className="flex w-[30px] items-center gap-[3px] pl-[3px]">
                <Ic n="tree" s={14} />
                <Ic n="down" s={9} />
              </span>
              <span className="h-full w-px bg-[#333]" />
              <span className="grow pl-[7px]">Geometry Nodes</span>
              <span className="flex h-full w-[19px] items-center justify-center bg-[#4c4c4c] text-[#8c8c8c]">
                <Ic n="shield" s={15} />
              </span>
              <span className="ml-px flex h-full w-[19px] items-center justify-center bg-[#4c4c4c]">
                <Ic n="copy" s={14} />
              </span>
              <span className="ml-px flex h-full w-[19px] items-center justify-center bg-[#4c4c4c]">
                <Ic n="x" s={11} />
              </span>
            </div>
            <div className="mt-[12px] flex h-[20px] items-center pl-[21px]">
              <Ic n="right" s={10} className="text-[#a0a0a0]" />
              <span className="ml-[4px]">Output Attributes</span>
            </div>
            <div className="mt-[5px] flex h-[20px] items-center pl-[21px]">
              <Ic n="right" s={10} className="text-[#a0a0a0]" />
              <span className="ml-[4px]">Internal Dependencies</span>
            </div>
          </div>
        </div>
      </div>
    </section>
  );
}

/* ---------- node editor ---------- */

type SockProps = { side: "l" | "r"; c: string; shape?: "o" | "d" | "h" | "e" };

function Sock({ side, c, shape = "o" }: SockProps) {
  const pos = side === "l" ? "absolute top-1/2 -left-[5px] -mt-[5px] " : "absolute top-1/2 -right-[5px] -mt-[5px] ";
  return (
    <svg width="10" height="10" viewBox="0 0 10 10" className={pos + c} fill="currentColor">
      {shape === "o" && <circle cx="5" cy="5" r="3.900" />}
      {shape === "e" && <circle cx="5" cy="5" r="3.900" fill="none" stroke="currentColor" />}
      {(shape === "d" || shape === "h") && <path d="M5 .6 L9.400 5 L5 9.400 L.6 5 Z" />}
      {shape === "h" && <circle cx="5" cy="5" r="1.400" fill="#181818" />}
    </svg>
  );
}

function Row({ label, side, c, shape, mt = "" }: { label: string; mt?: string } & SockProps) {
  return (
    <div className={"relative flex h-[19px] shrink-0 items-center px-[10px] pb-[2px] " + (side === "r" ? "justify-end " : "") + mt}>
      {label}
      <Sock side={side} c={c} shape={shape} />
    </div>
  );
}

function Node({ pos, title, head, headH, body, sel, children }: { pos: string; title: string; head: string; headH: string; body: string; sel?: boolean; children: React.ReactNode }) {
  return (
    <div className={"absolute flex flex-col rounded text-[9.2px] leading-none text-[#b4b4b4] " + pos + " " + body + (sel ? " ring-1 ring-[#e0e0e0]" : " shadow-[0_1px_5px_#000]")}>
      <div className={"flex shrink-0 items-center rounded-t pl-[9px] text-[#c4c4c4] " + head + " " + headH}>
        <Ic n="down" s={10} className="text-[#a0a0a0]" />
        <span className="ml-[3px] pb-px">{title}</span>
      </div>
      {children}
    </div>
  );
}

const TEAL = "text-[#00a284]";
const BLUE = "text-[#5a56a8]";
const PINK = "text-[#a68ab0]";
const GREEN = "text-[#4b6b4c]";

function NodeCanvas() {
  return (
    <>
      <svg className="absolute inset-0 h-full w-full" viewBox="0 729 1585 300" fill="none">
        <g fill="#222">
          {[35, 121, 207, 293, 379, 465, 722, 807, 892, 978, 1064, 1235, 1322, 1406, 1492].map((x) => (
            <React.Fragment key={x}>
              <rect x={x} y="787" width="1.500" height="1.500" />
              <rect x={x} y="873" width="1.500" height="1.500" />
              <rect x={x} y="958" width="1.500" height="1.500" />
            </React.Fragment>
          ))}
        </g>
        <path d="M812 803.500 C900 803.500 1000 811 1091 811" stroke="#00937a" strokeWidth="1.800" />
        <path d="M640 862.500 C780 862.500 950 849 1091 849" stroke="#9cc0b6" strokeWidth="1.800" />
        <path d="M812 822 C845 822 845 906 878 906" stroke="#50499a" strokeWidth="1.200" />
        <path d="M812 860 C838 860 850 868.500 878 868.500" stroke="#50499a" strokeWidth="1.200" />
        <path d="M998 800 C1040 800 1048 905 1091 905" stroke="#50499a" strokeWidth="1.200" />
        <path d="M1210 790 C1240 790 1260 795.500 1291 795.500" stroke="#009a7e" strokeWidth="2" />
        <path d="M636 988.500 C664 988.500 664 907 692 907" stroke="#008f76" strokeWidth="1.800" />
      </svg>

      <Node pos="left-[520px] top-[46px] h-[167px] w-[120px]" title="Object Info" head="bg-[#7e3448]" headH="h-[18px]" body="bg-[#2b2b2b]" sel>
        <Row label="Location" side="r" c={BLUE} mt="mt-[4px]" />
        <Row label="Rotation" side="r" c={BLUE} />
        <Row label="Scale" side="r" c={BLUE} mt="-mt-px" />
        <Row label="Geometry" side="r" c={TEAL} />
        <div className="mx-[10px] mt-[9px] flex h-[15px] shrink-0 overflow-hidden rounded-sm">
          <span className="flex w-[50px] items-center justify-center bg-[#424242] pb-px">Original</span>
          <span className="flex grow items-center justify-center bg-[#3a65a8] pb-px text-[#d0d0d0]">Relative</span>
        </div>
        <div className="relative mt-[6px] h-[16px] shrink-0 px-[10px]">
          <div className="flex h-full items-center rounded-sm border border-[#363636] bg-[#1d1d1d] px-[2px]">
            <Ic n="object" s={13} />
            <span className="ml-[6px] grow pb-px">Cube.002</span>
            <Ic n="x" s={11} />
          </div>
          <Sock side="l" c="text-[#b98556]" />
        </div>
        <div className="relative mt-px flex h-[19px] shrink-0 items-center pl-[10px]">
          <span className="flex h-[11px] w-[11px] items-center justify-center rounded-sm bg-[#3f6db2]">
            <svg width="8" height="8" viewBox="0 0 8 8" fill="none" stroke="#fff" strokeWidth="1.300">
              <path d="M1 4.200 L3.200 6.500 L7 1.500" />
            </svg>
          </span>
          <span className="ml-[3px] pb-px">As Instance</span>
          <Sock side="l" c="text-[#a382ad]" />
        </div>
      </Node>

      <Node pos="left-[516px] top-[229px] h-[62px] w-[120px]" title="Group Input" head="bg-[#151515]" headH="h-[18px]" body="bg-[#222222]">
        <Row label="Geometry" side="r" c={TEAL} mt="mt-[3px]" />
        <Row label="" side="r" c="text-[#707070]" shape="e" />
      </Node>

      <Node pos="left-[692px] top-[45px] h-[166px] w-[120px]" title="Curve to Points" head="bg-[#1b5f50]" headH="h-[17px]" body="bg-[#282828]">
        <Row label="Points" side="r" c={TEAL} mt="mt-[3px]" />
        <Row label="Tangent" side="r" c={BLUE} shape="d" />
        <Row label="Normal" side="r" c={BLUE} shape="d" />
        <Row label="Rotation" side="r" c={BLUE} shape="d" />
        <div className="mx-[10px] mt-[7px] flex h-[16px] shrink-0 items-center justify-between rounded-sm border border-[#363636] bg-[#202020] pr-px pb-px pl-[6px]">
          Count
          <Ic n="down" s={8} />
        </div>
        <Row label="Curve" side="l" c={TEAL} mt="mt-[5px]" />
        <div className="relative mt-px h-[16px] shrink-0 px-[10px]">
          <div className="flex h-full items-center justify-between rounded-sm bg-[#3e3e3e] px-[12px] pb-px">
            <span>Count</span>
            <span>10</span>
          </div>
          <Sock side="l" c={GREEN} />
        </div>
      </Node>

      <Node pos="left-[878px] top-[41px] h-[149px] w-[120px]" title="Align Euler to Vector" head="bg-[#1b5070]" headH="h-[17px]" body="bg-[#282828]">
        <Row label="Rotation" side="r" c={BLUE} shape="d" mt="mt-[4px]" />
        <div className="mx-[9px] mt-[8px] flex h-[15px] shrink-0 gap-px overflow-hidden rounded-sm">
          <span className="flex grow basis-0 items-center justify-center bg-[#424242]">X</span>
          <span className="flex grow basis-0 items-center justify-center bg-[#3a65a8] text-[#d0d0d0]">Y</span>
          <span className="flex grow basis-0 items-center justify-center bg-[#424242]">Z</span>
        </div>
        <div className="mr-[9px] mt-[6px] flex h-[16px] shrink-0 items-center justify-end">
          Pivot
          <span className="ml-[8px] flex h-full w-[58px] items-center justify-between rounded-sm border border-[#363636] bg-[#202020] pr-px pl-[6px]">
            X
            <Ic n="down" s={8} />
          </span>
        </div>
        <Row label="Rotation" side="l" c={BLUE} shape="d" mt="mt-[4px]" />
        <div className="relative mt-[2px] h-[15px] shrink-0 px-[9px]">
          <div className="flex h-full items-center justify-between rounded-sm bg-[#365f9f] px-[13px] pb-px">
            <span>Factor</span>
            <span>1.000</span>
          </div>
          <Sock side="l" c="text-[#8a8a8a]" shape="h" />
        </div>
        <Row label="Vector" side="l" c={BLUE} shape="d" mt="mt-[2px]" />
      </Node>

      <Node pos="left-[1091px] top-[31px] h-[228px] w-[119px]" title="Instance on Points" head="bg-[#1b5f50]" headH="h-[17px]" body="bg-[#282828]">
        <Row label="Instances" side="r" c={TEAL} mt="mt-[3px]" />
        <Row label="Points" side="l" c={TEAL} mt="mt-[3px]" />
        <Row label="Selection" side="l" c={PINK} shape="h" />
        <Row label="Instance" side="l" c={TEAL} />
        <div className="relative flex h-[18px] shrink-0 items-center pb-px pl-[9px]">
          <span className="mr-[3px] h-[11px] w-[11px] rounded-sm bg-[#424242]" />
          Pick Instance
          <Sock side="l" c={PINK} shape="h" />
        </div>
        <Row label="Instance Index" side="l" c={GREEN} shape="d" />
        <Row label="Rotation" side="l" c={BLUE} shape="d" />
        <Row label="Scale:" side="l" c={BLUE} shape="h" />
        <div className="mx-[9px] -mt-px flex shrink-0 flex-col gap-px overflow-hidden rounded-sm">
          {["X", "Y", "Z"].map((a) => (
            <div key={a} className="flex h-[16px] items-center justify-between bg-[#3a3a3a] px-[13px] pb-px text-[#969696]">
              <span>{a}</span>
              <span>1.000</span>
            </div>
          ))}
        </div>
      </Node>

      <Node pos="left-[1291px] top-[36px] h-[62px] w-[120px]" title="Group Output" head="bg-[#191919]" headH="h-[18px]" body="bg-[#2a2a2a]">
        <Row label="Geometry" side="l" c={TEAL} mt="mt-[3px]" />
        <Row label="" side="l" c="text-[#707070]" shape="e" />
      </Node>
    </>
  );
}

function NodeEditor() {
  return (
    <section className="relative flex h-[300px] w-[1585px] flex-col overflow-hidden rounded-lg bg-linear-to-b from-[#1c1c1c] to-[#141414]">
      <NodeCanvas />
      <div className="flex h-[30px] shrink-0 items-center pt-px text-[#c0c0c0]">
        <div className="ml-[8px] flex h-[20px] w-[32px] items-center justify-between rounded border border-[#333] px-[3px]">
          <Ic n="dots" s={15} />
          <Ic n="down" s={9} />
        </div>
        <span className="ml-[12px] w-[40px]">View</span>
        <span className="w-[46px]">Select</span>
        <span className="w-[34px]">Add</span>
        <span className="w-[34px]">Node</span>
        <div className="ml-[458px] flex h-[20px] w-[212px] items-center overflow-hidden rounded border border-[#333] bg-[#191919]">
          <span className="flex w-[30px] items-center gap-[3px] pl-[4px]">
            <Ic n="tree" s={14} />
            <Ic n="down" s={9} />
          </span>
          <span className="h-full w-px bg-[#333]" />
          <span className="grow pl-[7px]">Geometry Nodes</span>
          <span className="flex h-full w-[19px] items-center justify-center bg-[#434343] text-[#7c7c7c]">
            <Ic n="shield" s={15} />
          </span>
          <span className="ml-px flex h-full w-[19px] items-center justify-center bg-[#434343]">
            <Ic n="copy" s={14} />
          </span>
          <span className="ml-px flex h-full w-[19px] items-center justify-center bg-[#434343]">
            <Ic n="x" s={11} />
          </span>
        </div>
        <Ic n="pin" s={15} className="ml-[8px] text-[#777]" />
        <span className="ml-auto flex h-[19px] w-[19px] items-center justify-center rounded bg-[#2a2a2a] text-[#555]">
          <Ic n="upArrow" s={15} />
        </span>
        <div className="ml-[6px] flex h-[19px] w-[51px] items-center overflow-hidden rounded border border-[#333]">
          <span className="flex h-full w-[19px] items-center justify-center bg-[#434343] text-[#888]">
            <Ic n="magnet" s={15} />
          </span>
          <Ic n="nodeSnap" s={14} className="ml-[3px]" />
          <Ic n="down" s={9} className="ml-[3px]" />
        </div>
        <div className="mr-[7px] ml-[6px] flex h-[19px] w-[39px] items-center overflow-hidden rounded border border-[#333]">
          <span className="flex h-full w-[19px] items-center justify-center bg-[#3a66aa] text-[#dce4ee]">
            <Ic n="overlay" s={15} />
          </span>
          <Ic n="down" s={9} className="ml-[5px]" />
        </div>
      </div>
      <div className="mt-[9px] flex h-[20px] shrink-0 items-center text-[#b4b4b4]">
        <Ic n="right" s={9} className="-ml-px text-[#9a9a9a]" />
        <Ic n="object" s={14} className="ml-[11px]" />
        <span className="ml-[9px] w-[98px]">BezierCurve.001</span>
        <Ic n="right" s={10} />
        <Ic n="dots" s={15} className="ml-[7px]" />
        <span className="ml-[9px] w-[95px]">GeometryNodes</span>
        <Ic n="right" s={10} />
        <Ic n="tree" s={14} className="ml-[8px]" />
        <span className="ml-[9px]">Geometry Nodes</span>
        <Ic n="left" s={9} className="ml-auto text-[#9a9a9a]" />
      </div>
      <span className="absolute top-[56px] right-[2px] h-[228px] w-[3px] rounded bg-[#242424]" />
      <span className="absolute bottom-[2px] left-[10px] h-[3px] w-[1566px] rounded bg-[#202020]" />
    </section>
  );
}

/* ---------- status bar ---------- */

function StatusBar() {
  return (
    <div className="flex h-[20px] items-center bg-[#0f0f0f] pt-[2px] text-[#4a4a4a]">
      <Ic n="mouseL" s={15} className="ml-[10px]" />
      <span className="ml-[9px] w-[186px]">Select</span>
      <Ic n="mouseM" s={15} />
      <span className="ml-[10px] w-[186px]">Pan View</span>
      <Ic n="mouseR" s={15} />
      <span className="ml-[10px]">Object Context Menu</span>
      <span className="mr-[9px] ml-auto tracking-[0.08px]">Scene Collection | BezierCurve.001 | Verts:130 | Faces:54 | Tris:108 | Objects:0/3 | 3.3.1</span>
    </div>
  );
}

/* ---------- player overlay ---------- */

function PlayerOverlay() {
  return (
    <div className="absolute inset-0 flex flex-col text-[#ececec] [font-family:Roboto,sans-serif]">
      <div className="flex h-[90px] items-center pr-[27px] pl-[22px]">
        <h1 className="text-[33.7px] leading-none text-[#f0f0f0]">Geometry Nodes - path representation</h1>
        <svg width="38" height="38" viewBox="0 0 38 38" className="ml-auto">
          <circle cx="19" cy="19" r="18.700" fill="#ebebeb" />
          <path d="M18 8 V20 L28 26" fill="none" stroke="#151515" strokeWidth="3" />
        </svg>
        <svg width="39" height="33" viewBox="0 0 39 33" className="ml-[29px]">
          <path d="M24 1 L38 15.500 L24 30 V21.500 C13 21.500 6 24.500 1 32 C3 19 10.500 10.500 24 9 Z" fill="#ebebeb" />
        </svg>
      </div>
      <div className="grow" />
      <div className="mx-[30px] h-[7px] bg-white/55" />
      <div className="flex h-[68px] items-center">
        <svg width="25" height="30" viewBox="0 0 25 30" className="ml-[62px]" fill="#ebebeb">
          <path d="M0 0 L24.500 15 L0 30 Z" />
        </svg>
        <svg width="24" height="23" viewBox="0 0 24 23" className="ml-[51px]" fill="#ebebeb">
          <path d="M0 0 L17 11.500 L0 23 Z M19.500 0 H24 V23 H19.500 Z" />
        </svg>
        <svg width="28" height="27" viewBox="0 0 28 27" className="ml-[40px]" fill="#ebebeb">
          <path d="M0 8.500 H6 L14 1 V26 L6 18.500 H0 Z M17 7 C22.500 9.500 22.500 17.500 17 20 Z" />
          <path d="M17 1.700 C30 4.500 30 22.500 17 25.300" fill="none" stroke="#ebebeb" strokeWidth="2.800" />
        </svg>
        <span className="ml-[27px] w-[121px] pt-[2px] text-[25.500px] leading-none whitespace-nowrap">0:00 / 0:21</span>
        <svg width="16" height="10" viewBox="0 0 16 10" className="mb-[10px] ml-[574px]" fill="none" stroke="#ebebeb" strokeWidth="3">
          <path d="M1.500 1.500 L8 8 L14.500 1.500" />
        </svg>
        <svg width="32" height="25" viewBox="0 0 32 25" className="ml-auto">
          <rect width="32" height="25" rx="3" fill="#858585" />
          <path d="M4 12.500h6M13.500 12.500H28M4 18.500H19M22.500 18.500H28" stroke="#111" strokeWidth="3" />
        </svg>
        <div className="relative ml-[38px] h-[30px] w-[40px]">
          <svg width="28" height="28" viewBox="2 2 20 20" className="absolute bottom-0 left-0" fill="#ebebeb">
            <path d="M19.430 12.980c.04-.32.07-.64.07-.98s-.03-.66-.07-.98l2.110-1.650c.19-.15.24-.42.12-.64l-2-3.460c-.12-.22-.39-.3-.61-.22l-2.490 1c-.52-.4-1.080-.73-1.690-.98l-.38-2.650C14.460 2.180 14.250 2 14 2h-4c-.25 0-.46.18-.49.42l-.38 2.650c-.61.25-1.170.59-1.690.98l-2.490-1c-.23-.09-.49 0-.61.22l-2 3.460c-.13.22-.07.49.12.64l2.110 1.650c-.04.32-.07.65-.07.98s.03.66.07.98l-2.110 1.650c-.19.15-.24.42-.12.64l2 3.460c.12.22.39.3.61.22l2.490-1c.52.4 1.080.73 1.690.98l.38 2.650c.03.24.24.42.49.42h4c.25 0 .46-.18.49-.42l.38-2.650c.61-.25 1.170-.59 1.690-.98l2.490 1c.23.09.49 0 .61-.22l2-3.460c.12-.22.07-.49-.12-.64zM12 15.500c-1.930 0-3.500-1.570-3.500-3.500s1.570-3.500 3.500-3.500 3.500 1.570 3.500 3.500-1.570 3.500-3.500 3.500z" />
          </svg>
          <span className="absolute top-0 left-[13px] flex h-[21px] w-[26px] items-center justify-center rounded-sm bg-[#e60000] text-[14px] font-bold text-white">HD</span>
        </div>
        <svg width="29" height="28" viewBox="0 0 29 28" className="mr-[49px] ml-[26px]" fill="none" stroke="#ebebeb" strokeWidth="4.400">
          <path d="M0 8.300 H9 V0 M29 8.300 H20 V0 M0 19.700 H9 V28 M29 19.700 H20 V28" />
        </svg>
      </div>
    </div>
  );
}

export default function App() {
  return (
    <div className="relative h-[1080px] w-[1920px] overflow-hidden bg-black text-[11.1px] leading-none whitespace-nowrap [font-family:'DejaVu_Sans_Condensed','DejaVu_Sans',sans-serif]">
      <div className="flex h-[1049px] flex-col bg-[#0f0f0f]">
        <div className="h-[33px] shrink-0 bg-black" />
        <TopBar />
        <div className="flex h-[969px] gap-[3px] pt-px">
          <div className="flex w-[1585px] flex-col gap-px">
            <div className="flex h-[667px] gap-[2px]">
              <LeftStrip />
              <Viewport />
            </div>
            <NodeEditor />
          </div>
          <div className="flex flex-col gap-[4px]">
            <Outliner />
            <Properties />
          </div>
        </div>
        <StatusBar />
      </div>
      <PlayerOverlay />
    </div>
  );
}
